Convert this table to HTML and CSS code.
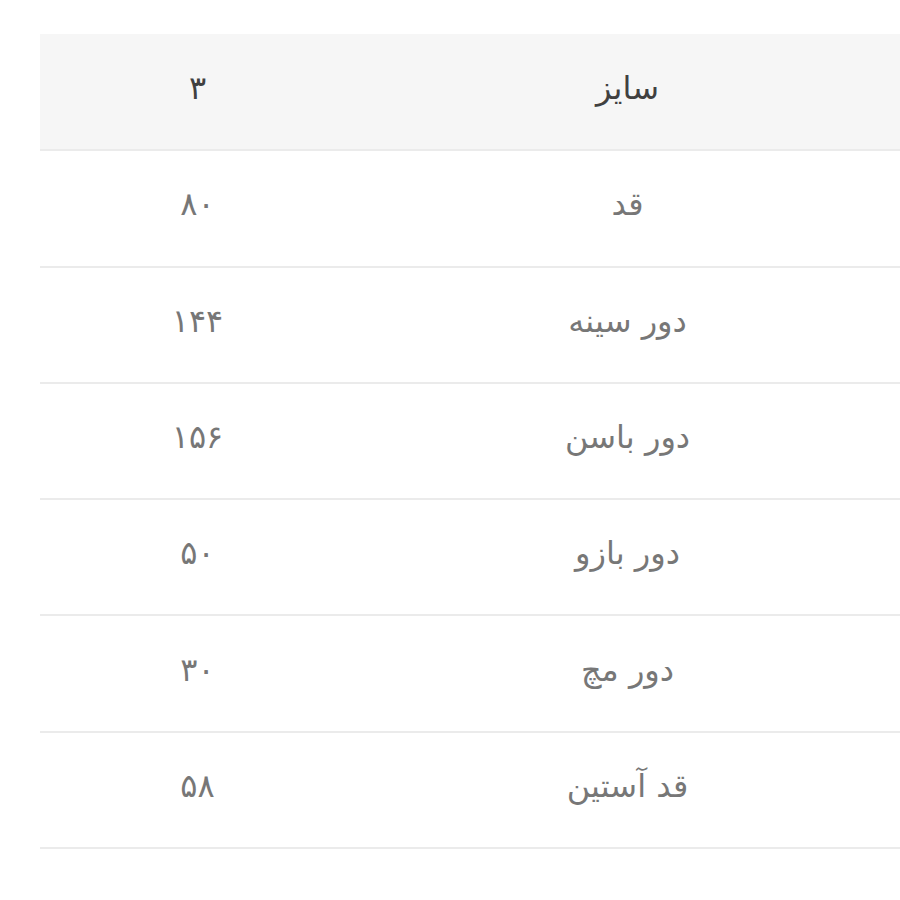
FILE: index.html
```html
<!DOCTYPE html>
<html lang="fa" dir="rtl">
<head>
<meta charset="utf-8">
<link rel="stylesheet" href="styles.css">
</head>
<body>
<div class="wrap">
<table class="size-table">
<thead>
<tr><th class="c-name">سایز</th><th class="c-val">۳</th></tr>
</thead>
<tbody>
<tr><td class="c-name">قد</td><td class="c-val">۸۰</td></tr>
<tr><td class="c-name">دور سینه</td><td class="c-val">۱۴۴</td></tr>
<tr><td class="c-name">دور باسن</td><td class="c-val">۱۵۶</td></tr>
<tr><td class="c-name">دور بازو</td><td class="c-val">۵۰</td></tr>
<tr><td class="c-name">دور مچ</td><td class="c-val">۳۰</td></tr>
<tr><td class="c-name">قد آستین</td><td class="c-val">۵۸</td></tr>
</tbody>
</table>
</div>
</body>
</html>
```
FILE: styles.css
```css
html, body {
  margin: 0;
  padding: 0;
  background: #ffffff;
}
.wrap {
  padding: 34px 0 0 40px;
  direction: rtl;
}
.size-table {
  width: 860px;
  border-collapse: collapse;
  table-layout: fixed;
  font-family: "DejaVu Sans", sans-serif;
  font-size: 32px;
}
.size-table th,
.size-table td {
  height: 116.3px;
  padding: 0 0 8px 0;
  box-sizing: border-box;
  text-align: center;
  vertical-align: middle;
  border-bottom: 2px solid #ebebeb;
}
.size-table thead tr {
  background: #f6f6f6;
}
.size-table th {
  color: #404040;
  font-weight: normal;
}
.size-table td {
  color: #777777;
}
.c-name {
  width: 545px;
}
.c-val {
  width: 315px;
}
```
